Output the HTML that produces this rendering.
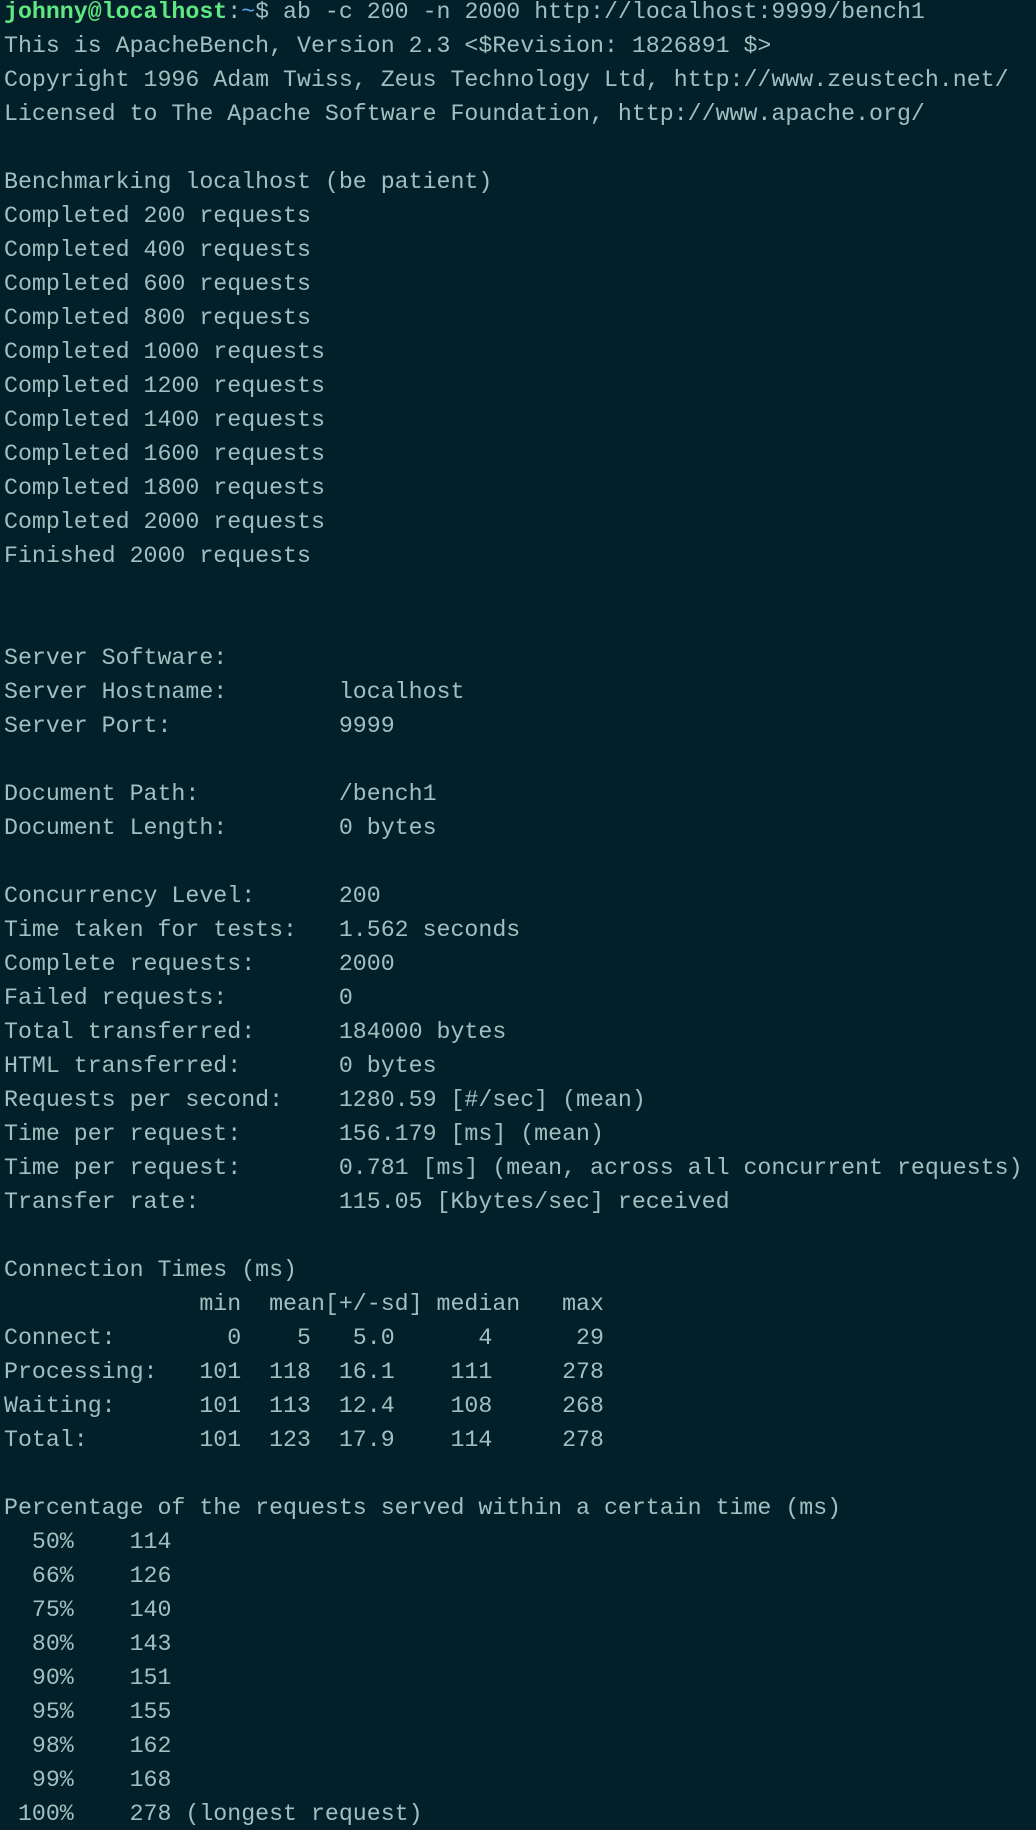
<!DOCTYPE html>
<html><head><meta charset="utf-8"><style>
html,body{margin:0;padding:0;background:#03202a;width:1036px;height:1830px;overflow:hidden}
pre{margin:0;padding:0 0 0 4px;position:relative;top:-5px;font-family:"Liberation Mono",monospace;font-size:23.25px;line-height:34px;color:#a0c0c0;white-space:pre}
.g{color:#5ee882;font-weight:bold}.b{color:#5aa8e8}
</style></head><body><pre><span class="g">johnny@localhost</span>:<span class="b">~</span>$ ab -c 200 -n 2000 http://localhost:9999/bench1
This is ApacheBench, Version 2.3 &lt;$Revision: 1826891 $&gt;
Copyright 1996 Adam Twiss, Zeus Technology Ltd, http://www.zeustech.net/
Licensed to The Apache Software Foundation, http://www.apache.org/

Benchmarking localhost (be patient)
Completed 200 requests
Completed 400 requests
Completed 600 requests
Completed 800 requests
Completed 1000 requests
Completed 1200 requests
Completed 1400 requests
Completed 1600 requests
Completed 1800 requests
Completed 2000 requests
Finished 2000 requests


Server Software:
Server Hostname:        localhost
Server Port:            9999

Document Path:          /bench1
Document Length:        0 bytes

Concurrency Level:      200
Time taken for tests:   1.562 seconds
Complete requests:      2000
Failed requests:        0
Total transferred:      184000 bytes
HTML transferred:       0 bytes
Requests per second:    1280.59 [#/sec] (mean)
Time per request:       156.179 [ms] (mean)
Time per request:       0.781 [ms] (mean, across all concurrent requests)
Transfer rate:          115.05 [Kbytes/sec] received

Connection Times (ms)
              min  mean[+/-sd] median   max
Connect:        0    5   5.0      4      29
Processing:   101  118  16.1    111     278
Waiting:      101  113  12.4    108     268
Total:        101  123  17.9    114     278

Percentage of the requests served within a certain time (ms)
  50%    114
  66%    126
  75%    140
  80%    143
  90%    151
  95%    155
  98%    162
  99%    168
 100%    278 (longest request)</pre></body></html>
